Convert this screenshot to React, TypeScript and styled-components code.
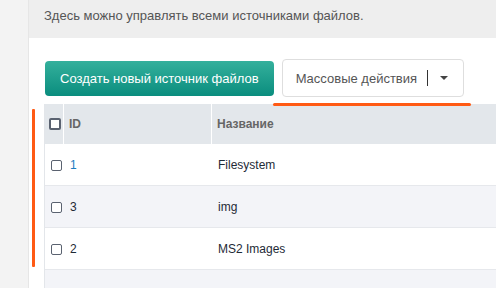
import styled, { createGlobalStyle } from "styled-components";

const GlobalStyle = createGlobalStyle`
  html, body {
    margin: 0;
    padding: 0;
    overflow: hidden;
    background: #f3f3f3;
    font-family: "Liberation Sans", Arial, sans-serif;
  }
`;

interface Source {
  id: number;
  name: string;
  visited?: boolean;
}

const sources: Source[] = [
  { id: 1, name: "Filesystem", visited: true },
  { id: 3, name: "img" },
  { id: 2, name: "MS2 Images" },
];

const PageContainer = styled.div`
  display: flex;
  flex-direction: row;
  width: 496px;
  height: 288px;
  overflow: hidden;
`;

const Gutter = styled.div`
  width: 28px;
  flex-shrink: 0;
  background: #f3f3f3;
  border-right: 1px solid #e6e6e6;
`;

const Main = styled.div`
  display: flex;
  flex-direction: column;
  flex: 1;
  background: #ffffff;
  min-width: 0;
  overflow: hidden;
`;

const Intro = styled.div`
  flex-shrink: 0;
  height: 38px;
  box-sizing: border-box;
  padding: 8px 0 0 15px;
  background: #eeeeee;
  color: #555555;
  font-size: 13px;
  line-height: 15px;
  white-space: nowrap;
`;

const Content = styled.div`
  flex: 1;
  position: relative;
  padding: 21px 0 0 15px;
`;

const Toolbar = styled.div`
  display: flex;
  align-items: center;
  gap: 8px;
  height: 38px;
`;

const PrimaryButton = styled.button`
  height: 35px;
  margin-left: 1px;
  padding: 0 15px;
  border: none;
  border-radius: 4px;
  background: linear-gradient(#34b09c, #0a8d7e);
  color: #ffffff;
  font-family: inherit;
  font-size: 13px;
  white-space: nowrap;
`;

const ActionsWrap = styled.div`
  position: relative;
  z-index: 2;

  /* orange highlight under the bulk actions button */
  &::after {
    content: "";
    position: absolute;
    left: -9px;
    top: 44px;
    width: 198px;
    height: 3px;
    border-radius: 2px;
    background: #ff5a14;
  }
`;

const ActionsButton = styled.button`
  display: flex;
  align-items: center;
  height: 38px;
  width: 182px;
  box-sizing: border-box;
  padding: 0 0 0 13px;
  border: 1px solid #dedede;
  border-radius: 4px;
  background: #ffffff;
  color: #555555;
  font-family: inherit;
  font-size: 13px;
  white-space: nowrap;
`;

const Divider = styled.span`
  width: 1px;
  height: 16px;
  margin-left: 10px;
  background: #333333;
`;

const Caret = styled.span`
  margin-left: 12px;
  width: 0;
  height: 0;
  border-left: 4px solid transparent;
  border-right: 4px solid transparent;
  border-top: 4px solid #444444;
`;

const TableWrap = styled.div`
  position: relative;
  margin-top: 7px;

  /* orange highlight beside the rows */
  &::before {
    content: "";
    position: absolute;
    left: -12px;
    top: 5px;
    width: 3px;
    height: 158px;
    border-radius: 1px;
    background: #ff5a14;
  }
`;

const Table = styled.div`
  width: 640px;
  min-height: 200px;
  border-left: 1px solid #e3e6ea;
  background: #f3f4f8;
`;

const HeadRow = styled.div`
  display: grid;
  grid-template-columns: 18px 148px 1fr;
  height: 40px;
  background: #e3e7eb;
  color: #666666;
  font-size: 12px;
  font-weight: bold;
`;

const HeadCell = styled.div<{ $first?: boolean }>`
  display: flex;
  align-items: center;
  padding-left: ${(p) => (p.$first ? "4px" : "5px")};
  border-left: ${(p) => (p.$first ? "none" : "1px solid #ffffff")};
`;

const Row = styled.div<{ $alt?: boolean }>`
  display: grid;
  grid-template-columns: 18px 148px 1fr;
  height: 41px;
  border-bottom: 1px solid #e6e8ec;
  background: ${(p) => (p.$alt ? "#f3f4f8" : "#ffffff")};
  color: #1e2a36;
  font-size: 12px;
`;

const Cell = styled.div<{ $first?: boolean }>`
  display: flex;
  align-items: center;
  padding-left: ${(p) => (p.$first ? "6px" : "7px")};
  padding-top: 1px;
`;

const IdLink = styled.span<{ $visited?: boolean }>`
  color: ${(p) => (p.$visited ? "#1b7cc0" : "#1e2a36")};
`;

const Check = styled.span<{ $head?: boolean }>`
  display: inline-block;
  box-sizing: border-box;
  width: ${(p) => (p.$head ? "12px" : "11px")};
  height: ${(p) => (p.$head ? "12px" : "11px")};
  border: ${(p) => (p.$head ? "2px solid #5a6270" : "1px solid #5a6270")};
  border-radius: 2px;
  background: #ffffff;
`;

const App = () => {
  return (
    <PageContainer>
      <GlobalStyle />
      <Gutter />
      <Main>
        <Intro>Здесь можно управлять всеми источниками файлов.</Intro>
        <Content>
          <Toolbar>
            <PrimaryButton>Создать новый источник файлов</PrimaryButton>
            <ActionsWrap>
              <ActionsButton>
                Массовые действия
                <Divider />
                <Caret />
              </ActionsButton>
            </ActionsWrap>
          </Toolbar>
          <TableWrap>
            <Table>
              <HeadRow>
                <HeadCell $first>
                  <Check $head />
                </HeadCell>
                <HeadCell>ID</HeadCell>
                <HeadCell>Название</HeadCell>
              </HeadRow>
              {sources.map((s, i) => (
                <Row key={s.id} $alt={i % 2 === 1}>
                  <Cell $first>
                    <Check />
                  </Cell>
                  <Cell>
                    <IdLink $visited={s.visited}>{s.id}</IdLink>
                  </Cell>
                  <Cell>{s.name}</Cell>
                </Row>
              ))}
            </Table>
          </TableWrap>
        </Content>
      </Main>
    </PageContainer>
  );
};

export default App;
